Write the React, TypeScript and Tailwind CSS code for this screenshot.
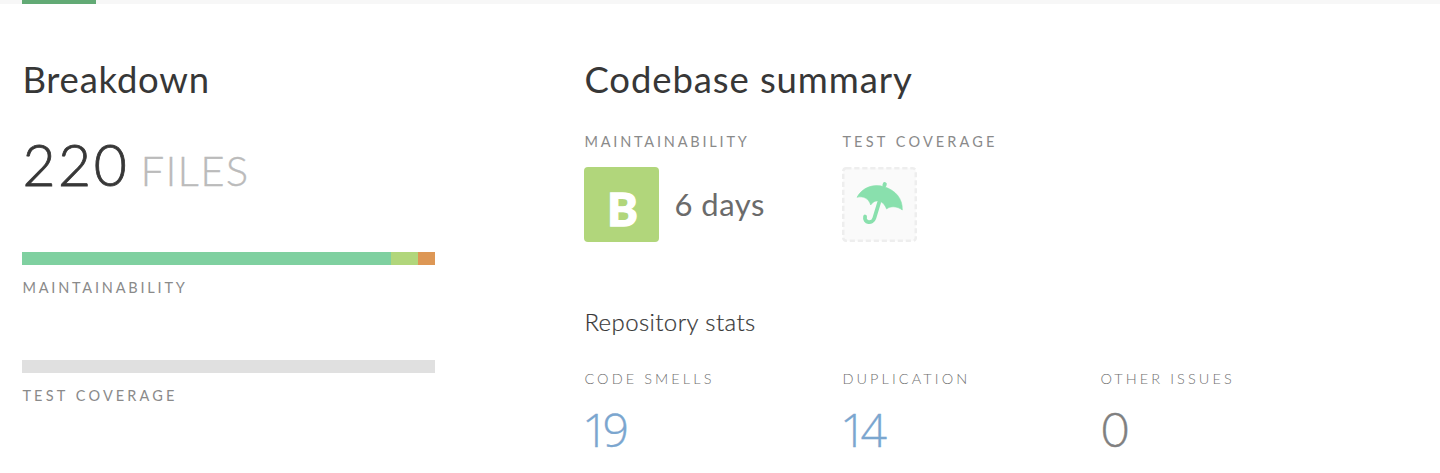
import type { ReactNode } from 'react';

function Label({ children, light = false }: { children: ReactNode; light?: boolean }) {
  return (
    <div
      className={
        light
          ? 'h-5 whitespace-nowrap text-[14.5px] leading-5 font-light tracking-[3.08px] text-[#707070]'
          : 'h-5 whitespace-nowrap text-[14.5px] leading-5 font-normal text-[#8a8a8a]'
      }
    >
      {children}
    </div>
  );
}

function Stat({ label, value, muted = false }: { label: string; value: string; muted?: boolean }) {
  return (
    <div className="w-[258px]">
      <Label light>{label}</Label>
      <div
        className={
          muted
            ? 'mt-[15px] ml-px text-[47px] leading-[50px] font-light text-[#808080] [-webkit-text-stroke:0.4px_#808080]'
            : "mt-[15px] -ml-[2.5px] font-['Open_Sans',sans-serif] text-[46.5px] leading-[50px] font-light tracking-[-6px] text-[#7ba6cf] [-webkit-text-stroke:0.3px_#7ba6cf]"
        }
      >
        {value}
      </div>
    </div>
  );
}

function Umbrella() {
  return (
    <svg viewBox="0 0 75 75" className="size-[75px]" fill="none">
      <rect x="1.25" y="1.25" width="72.5" height="72.5" rx="3" fill="#fafafa" stroke="#eeeeee" strokeWidth="2.5" strokeDasharray="5.2 2.8" />
      <path d="M15 30.3C20.3 20.5 31.3 16.3 42.3 19.8C53.3 23.3 60.8 31.5 60.3 43C55.3 39.2 48.3 38.7 44.6 42C42.8 37.2 40 34.8 37.1 34.2C33.8 33.3 31.3 34.5 28.7 38C26.8 31.5 21.3 28.7 15 30.3Z" fill="#89e0ad" stroke="#89e0ad" strokeWidth="0.6" strokeLinejoin="round" />
      <path d="M42.4 18.3L42.8 17.1" stroke="#89e0ad" strokeWidth="4" strokeLinecap="round" />
      <path d="M37.1 35.5L32.3 51.3C30.5 57 21.6 56.3 23.1 49.5" stroke="#89e0ad" strokeWidth="3.8" strokeLinecap="round" />
    </svg>
  );
}

export default function App() {
  return (
    <div className="h-[473px] w-[1440px] overflow-hidden bg-white font-['Lato',sans-serif] text-[#373737]">
      <div className="h-1 bg-[#f7f7f7] pl-[22.4px]">
        <div className="h-[4.4px] w-[74px] bg-[#62aa75]" />
      </div>
      <div className="flex pl-[22.4px]">
        <section className="w-[562px] pt-[55px]">
          <h1 className="pt-px text-[36.5px] leading-[38px] tracking-[0.75px]">Breakdown</h1>
          <div className="mt-[36px] flex h-[68px] items-baseline whitespace-nowrap leading-[60px] font-light">
            <span className="text-[57px] tracking-[2.6px] [-webkit-text-stroke:0.8px_#373737]">220</span>
            <span className="ml-[11px] text-[42px] tracking-[1.3px] text-[#bbb] [-webkit-text-stroke:0.3px_#bbb]">FILES</span>
          </div>
          <div className="mt-[50px] flex h-[13px] w-[412.4px]">
            <div className="w-[369px] bg-[#7fd0a0]" />
            <div className="w-[26.4px] bg-[#b1d67b]" />
            <div className="w-[17px] bg-[#dd9755]" />
          </div>
          <div className="mt-[13px] tracking-[2.8px]">
            <Label>MAINTAINABILITY</Label>
          </div>
          <div className="mt-[62px] h-[13px] w-[412.4px] bg-[#e0e0e0]" />
          <div className="mt-[13px] tracking-[3.15px] [word-spacing:1px]">
            <Label>TEST COVERAGE</Label>
          </div>
        </section>
        <section className="flex-1 pt-[55px]">
          <h1 className="pt-px text-[36.5px] leading-[38px] tracking-[0.9px]">Codebase summary</h1>
          <div className="mt-[34px] flex">
            <div className="w-[258px]">
              <div className="tracking-[2.8px]">
                <Label>MAINTAINABILITY</Label>
              </div>
              <div className="mt-[15px] flex items-center">
                <div className="flex size-[75px] items-center justify-center rounded-[4px] bg-[#b1d67b] pt-[8px] pl-px text-[46px] leading-none font-black text-white [-webkit-text-stroke:1.4px_#fff]">
                  B
                </div>
                <span className="-mt-[2px] ml-[15px] whitespace-nowrap text-[31px] leading-10 tracking-[0.5px] text-[#6b6b6b]">6 days</span>
              </div>
            </div>
            <div className="w-[258px]">
              <div className="tracking-[3.15px] [word-spacing:1px]">
                <Label>TEST COVERAGE</Label>
              </div>
              <div className="mt-[15px]">
                <Umbrella />
              </div>
            </div>
          </div>
          <h2 className="mt-[64.5px] text-[24px] leading-[30px] font-light tracking-[0.4px] [-webkit-text-stroke:0.2px_#373737]">Repository stats</h2>
          <div className="mt-[32px] flex">
            <Stat label="CODE SMELLS" value="19" />
            <Stat label="DUPLICATION" value="14" />
            <Stat label="OTHER ISSUES" value="0" muted />
          </div>
        </section>
      </div>
    </div>
  );
}
